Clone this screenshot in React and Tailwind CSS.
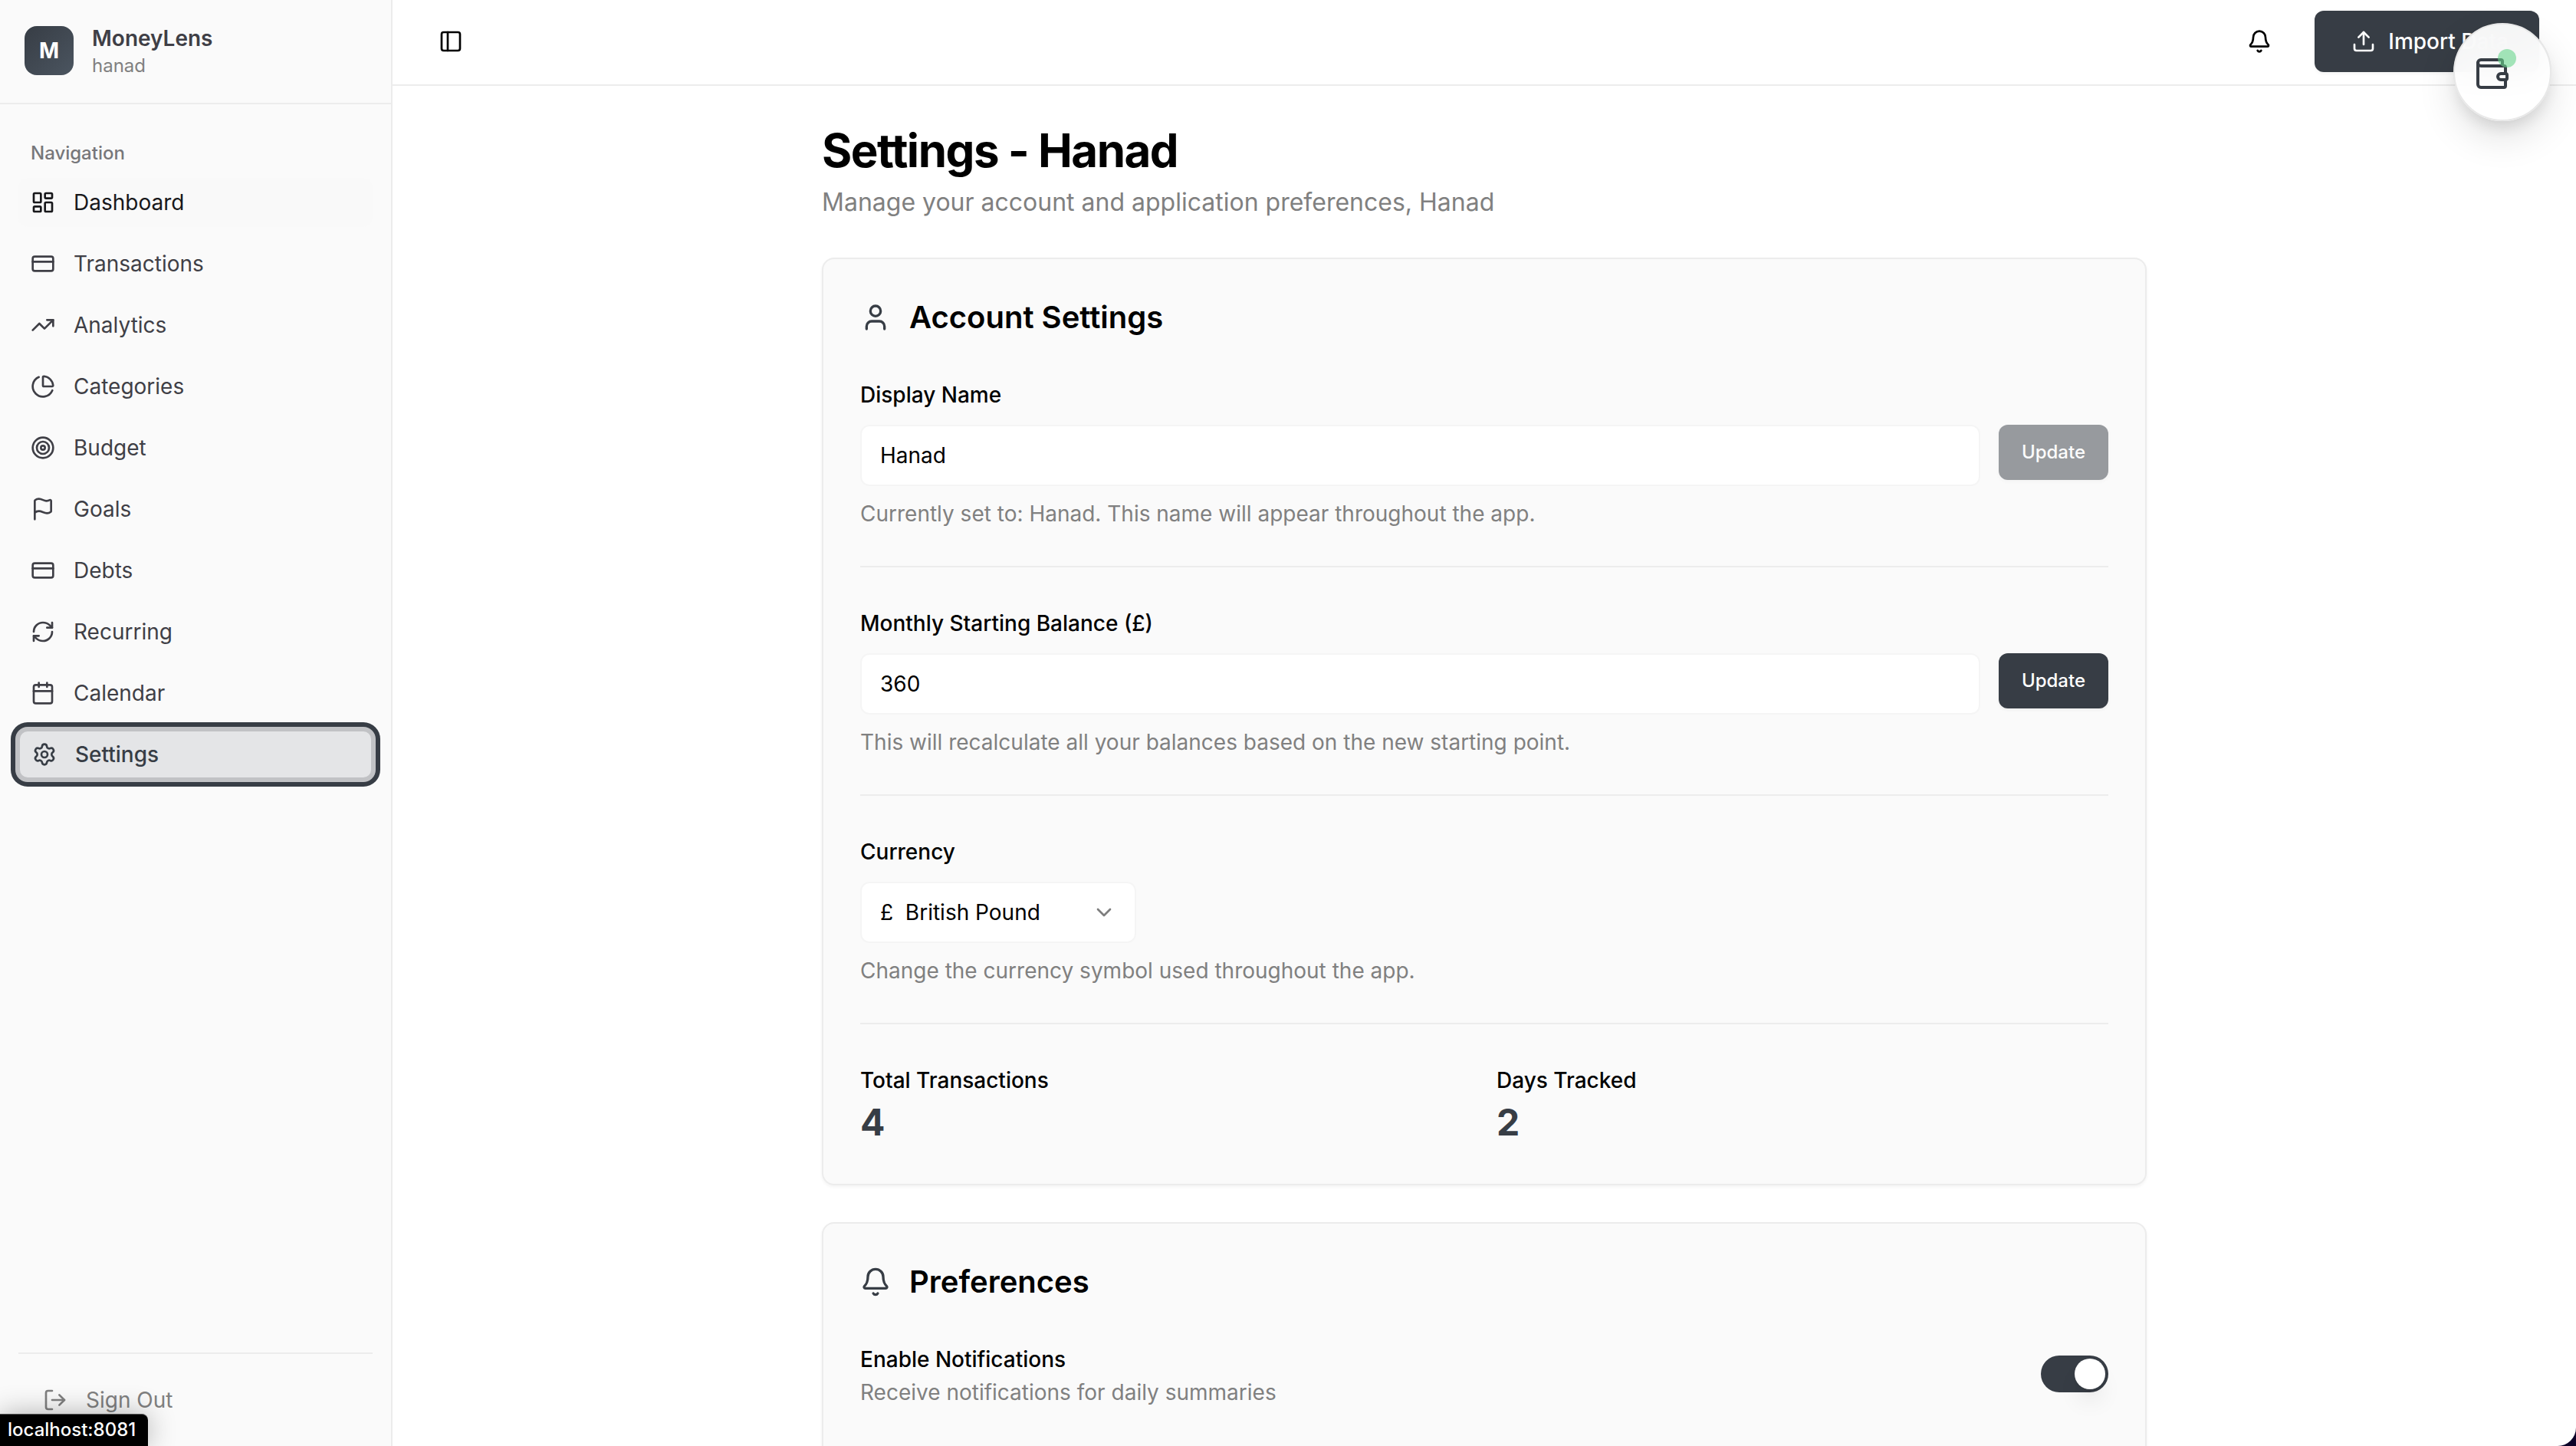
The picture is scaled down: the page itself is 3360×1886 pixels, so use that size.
import { useState } from "react";
import {
  Bell,
  Calendar,
  ChartPie,
  ChevronDown,
  CreditCard,
  Flag,
  LayoutDashboard,
  LogOut,
  PanelLeft,
  RefreshCw,
  Settings,
  Target,
  TrendingUp,
  Upload,
  User,
  Wallet,
} from "lucide-react";

const NAV_ITEMS = [
  { label: "Dashboard", icon: LayoutDashboard, hovered: true },
  { label: "Transactions", icon: CreditCard },
  { label: "Analytics", icon: TrendingUp },
  { label: "Categories", icon: ChartPie },
  { label: "Budget", icon: Target },
  { label: "Goals", icon: Flag },
  { label: "Debts", icon: CreditCard },
  { label: "Recurring", icon: RefreshCw },
  { label: "Calendar", icon: Calendar },
  { label: "Settings", icon: Settings, active: true },
];

const NAV_STYLES = {
  base: "text-[#3f3f46]",
  hovered: "bg-[#f9f9f9] text-[#18181b]",
  active:
    "border-2 border-[#c1c2c5] bg-[#e4e5e7] font-medium text-[#373d45] shadow-[0_0_0_4px_#c1c2c5,0_0_0_10px_#373d45]",
};

function NavLink({ label, icon: Icon, hovered, active }) {
  const tone = active ? NAV_STYLES.active : hovered ? NAV_STYLES.hovered : NAV_STYLES.base;
  return (
    <li>
      <a
        href={`#${label.toLowerCase()}`}
        aria-current={active ? "page" : undefined}
        className={`flex h-16 items-center gap-6 rounded-xl px-4 text-[28px] leading-10 ${tone}`}
      >
        <Icon className="size-8 shrink-0" />
        {label}
      </a>
    </li>
  );
}

function Sidebar() {
  return (
    <aside className="flex w-[512px] shrink-0 flex-col border-r-2 border-[#ececec] bg-[#fafafa]">
      <div className="flex items-center gap-6 border-b-2 border-[#ececec] px-8 pt-[30px] pb-8">
        <div className="flex size-16 items-center justify-center rounded-2xl bg-linear-to-br from-[#373d45] to-[#4b5560] text-[28px] font-bold text-white">
          M
        </div>
        <div>
          <p className="text-[28px] leading-10 font-semibold text-[#3f3f46]">MoneyLens</p>
          <p className="text-2xl leading-8 text-[#808080]">hanad</p>
        </div>
      </div>
      <nav aria-labelledby="nav-title" className="flex-1 px-6 pt-8">
        <h2 id="nav-title" className="px-4 text-2xl leading-16 font-medium text-[#77777a]">
          Navigation
        </h2>
        <ul className="flex flex-col gap-4">
          {NAV_ITEMS.map((item) => (
            <NavLink key={item.label} {...item} />
          ))}
        </ul>
      </nav>
      <div className="px-6 pb-6">
        <div className="border-t-2 border-[#ececec] pt-6">
          <button
            type="button"
            className="flex h-18 w-full items-center gap-6 px-8 text-[28px] leading-10 text-[#808080]"
          >
            <LogOut className="size-8" />
            Sign Out
          </button>
        </div>
      </div>
    </aside>
  );
}

function TopBar() {
  return (
    <header className="flex shrink-0 items-center justify-between border-b-2 border-[#ececec] px-12 pt-[14px] pb-4">
      <button type="button" aria-label="Toggle sidebar" className="flex size-14 items-center justify-center">
        <PanelLeft className="size-8" />
      </button>
      <div className="flex items-center gap-8">
        <button type="button" aria-label="Notifications" className="flex size-20 items-center justify-center">
          <Bell className="size-8" />
        </button>
        <button
          type="button"
          className="flex h-20 items-center gap-4 rounded-xl bg-[#373d45] pr-10 pl-12 text-[28px] font-medium text-white shadow-[0_2px_4px_rgba(0,0,0,0.05)]"
        >
          <Upload className="size-8" />
          Import Data
        </button>
      </div>
    </header>
  );
}

function Card({ icon: Icon, title, children }) {
  return (
    <section className="rounded-2xl border-2 border-[#ececec] bg-[#fafafa] p-12 shadow-[0_2px_4px_rgba(0,0,0,0.05)]">
      <div className="mb-12 flex items-center gap-6">
        <Icon className="size-10 text-[#373d45]" />
        <h2 className="text-[40px] leading-14 font-semibold">{title}</h2>
      </div>
      {children}
    </section>
  );
}

const LABEL = "block pt-0.5 text-[28px] leading-[46px] font-medium";
const HINT = "text-[28px] leading-10 text-[#808080]";
const FIELD = "h-20 rounded-xl border-2 border-[#f5f5f5] bg-white px-6 text-[28px]";

function UpdateField({ id, label, hint, initial, inputMode, disabled }) {
  const [value, setValue] = useState(initial);
  return (
    <div>
      <label htmlFor={id} className={`${LABEL} mb-4`}>
        {label}
      </label>
      <div className="mb-4 flex items-start gap-6">
        <input
          id={id}
          inputMode={inputMode}
          value={value}
          onChange={(event) => setValue(event.target.value)}
          className={`${FIELD} min-w-0 flex-1`}
        />
        <button
          type="button"
          disabled={disabled}
          className="h-18 rounded-xl bg-[#373d45] px-[30px] text-2xl font-medium text-white shadow-[0_2px_4px_rgba(0,0,0,0.05)] disabled:opacity-50"
        >
          Update
        </button>
      </div>
      <p className={HINT}>{hint}</p>
    </div>
  );
}

function Divider() {
  return <hr className="my-12 border-t-2 border-[#ececec]" />;
}

function Stat({ label, value }) {
  return (
    <div>
      <p className={LABEL}>{label}</p>
      <p className="text-5xl leading-16 font-bold text-[#373d45]">{value}</p>
    </div>
  );
}

function AccountSettings() {
  return (
    <Card icon={User} title="Account Settings">
      <UpdateField
        id="display-name"
        label="Display Name"
        initial="Hanad"
        hint="Currently set to: Hanad. This name will appear throughout the app."
        disabled
      />
      <Divider />
      <UpdateField
        id="starting-balance"
        label="Monthly Starting Balance (£)"
        initial="360"
        inputMode="decimal"
        hint="This will recalculate all your balances based on the new starting point."
      />
      <Divider />
      <div>
        <label htmlFor="currency" className={`${LABEL} mb-4`}>
          Currency
        </label>
        <div className="relative mb-4 w-[360px]">
          <select id="currency" defaultValue="gbp" className={`${FIELD} w-full appearance-none`}>
            <option value="gbp">{"£\u00a0\u00a0British Pound"}</option>
          </select>
          <ChevronDown className="pointer-events-none absolute top-6 right-[26px] size-8 opacity-50" />
        </div>
        <p className={HINT}>Change the currency symbol used throughout the app.</p>
      </div>
      <Divider />
      <div className="grid grid-cols-2 gap-8">
        <Stat label="Total Transactions" value="4" />
        <Stat label="Days Tracked" value="2" />
      </div>
    </Card>
  );
}

function Preferences() {
  const [enabled, setEnabled] = useState(true);
  return (
    <Card icon={Bell} title="Preferences">
      <div className="flex items-center justify-between pb-12">
        <div>
          <label htmlFor="notifications" className={LABEL}>
            Enable Notifications
          </label>
          <p className={HINT}>Receive notifications for daily summaries</p>
        </div>
        <input
          id="notifications"
          type="checkbox"
          role="switch"
          checked={enabled}
          onChange={(event) => setEnabled(event.target.checked)}
          className="flex h-12 w-22 appearance-none items-center rounded-full bg-[#d4d4d8] p-1 before:size-10 before:rounded-full before:bg-white before:shadow-[0_20px_30px_-6px_rgba(0,0,0,0.1),0_8px_12px_-8px_rgba(0,0,0,0.1)] checked:justify-end checked:bg-[#373d45]"
        />
      </div>
    </Card>
  );
}

function WalletBubble() {
  return (
    <button
      type="button"
      aria-label="Open wallet"
      className="absolute top-[30px] right-8 size-32 rounded-full border-2 border-[#e8e8e8] bg-white/95 shadow-[0_20px_50px_rgba(0,0,0,0.12),0_12px_24px_-8px_rgba(0,0,0,0.15)] backdrop-blur-xl"
    >
      <Wallet className="absolute top-10 left-6 size-12 text-[#373d45]" />
      <span className="absolute top-8 left-14 size-6 rounded-full bg-[#68d68c]/60" />
    </button>
  );
}

export default function App() {
  return (
    <div className="h-screen bg-[#0b0228] font-['Inter',sans-serif] text-black">
      <div className="relative flex h-full overflow-hidden rounded-br-3xl bg-white">
        <Sidebar />
        <div className="flex min-w-0 flex-1 flex-col">
          <TopBar />
          <main className="min-h-0 flex-1 overflow-hidden">
            <div className="mx-auto flex max-w-[1792px] flex-col gap-12 px-8 pt-12">
              <div>
                <h1 className="mb-2 text-6xl leading-18 font-bold tracking-tight">Settings - Hanad</h1>
                <p className="text-[32px] leading-12 text-[#808080]">
                  Manage your account and application preferences, Hanad
                </p>
              </div>
              <AccountSettings />
              <Preferences />
            </div>
          </main>
        </div>
        <WalletBubble />
        <div
          role="status"
          className="absolute bottom-0 left-0 rounded-tr-lg border-t border-[#555] bg-black pr-4 pb-px pl-[10px] text-2xl leading-10 font-medium text-white shadow-[0_0_36px_rgba(0,0,0,0.3)]"
        >
          localhost:8081
        </div>
      </div>
    </div>
  );
}
